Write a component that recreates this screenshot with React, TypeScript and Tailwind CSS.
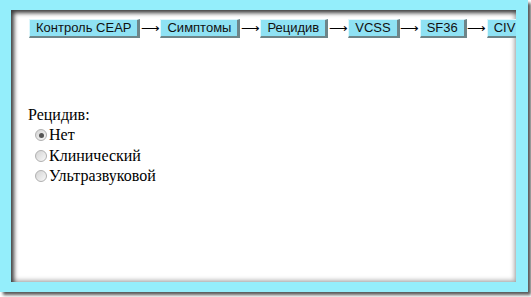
import React from 'react';

const steps = ['Контроль CEAP', 'Симптомы', 'Рецидив', 'VCSS', 'SF36', 'CIVIQ'];
const options = ['Нет', 'Клинический', 'Ультразвуковой'];

function Radio({ checked }: { checked?: boolean }) {
  return (
    <span className="mr-[2px] ml-[7px] flex h-[12px] w-[12px] items-center justify-center rounded-full border border-[#b0b0b0] bg-gradient-to-br from-[#d4d4d4] to-[#f8f8f8]">
      {checked && <span className="h-[5px] w-[5px] rounded-full bg-[#555]" />}
    </span>
  );
}

export default function App() {
  return (
    <div className="h-[297px] w-[531px] overflow-hidden bg-white">
      <div className="h-[292px] w-[528px] bg-[#94eefb] pt-[10px] pb-[10px] pl-[11px] pr-[12px] shadow-[3px_3px_3px_#5a5a5a]">
        <div className="h-full w-full overflow-hidden bg-white pt-[9px] shadow-[inset_3px_3px_4px_#3a3a3a,inset_-2px_-2px_4px_#b5b5b5]">
          <div className="flex items-start whitespace-nowrap pl-[18px]">
            {steps.map((step, i) => (
              <div key={step} className="flex items-start">
                {i > 0 && (
                  <span className="flex h-[19px] w-[20px] items-center justify-center font-['DejaVu_Sans',sans-serif] text-[13px] leading-[19px] font-extralight text-black">⟶</span>
                )}
                <span className="border-t border-l border-t-[#dff7fc] border-l-[#dff7fc] border-r-[3px] border-b-2 border-r-[#6e8589] border-b-[#6e8589] bg-[#8fe2f4] px-[6px] font-['Liberation_Sans',Arial,sans-serif] text-[13px] leading-[16px] text-[#111]">
                  {step}
                </span>
              </div>
            ))}
          </div>
          <div className="mt-[67px] pl-[17px] font-['Liberation_Serif','Times_New_Roman',serif] text-[16px] text-black">
            <div className="h-[20px] leading-[20px]">Рецидив:</div>
            {options.map((opt, i) => (
              <div key={opt} className="flex h-[20.5px] items-center leading-[20px]">
                <Radio checked={i === 0} />
                <span>{opt}</span>
              </div>
            ))}
          </div>
        </div>
      </div>
    </div>
  );
}
